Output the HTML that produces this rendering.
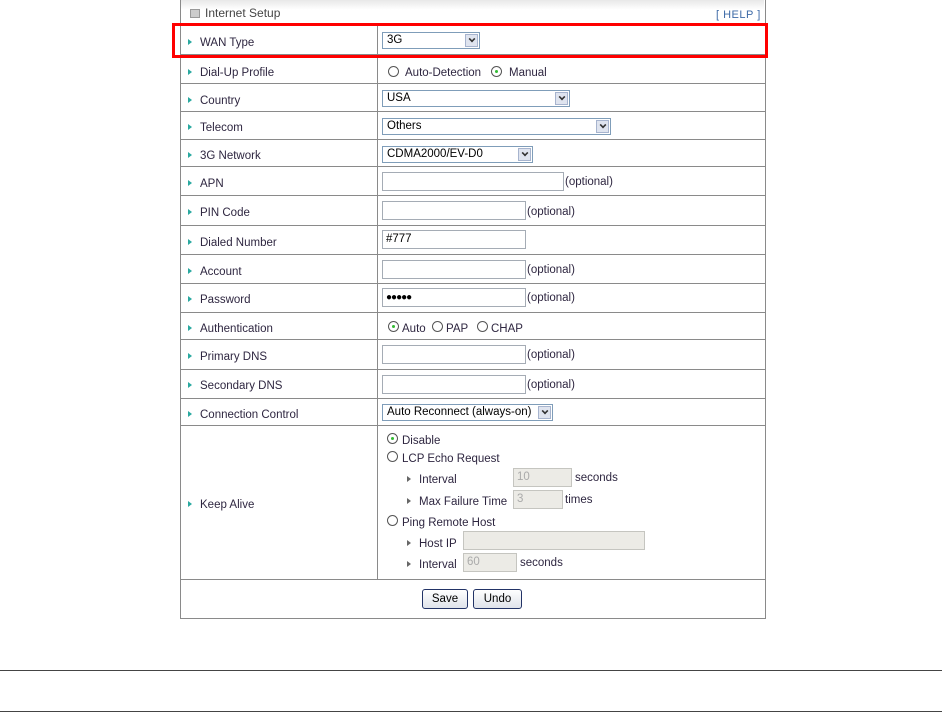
<!DOCTYPE html>
<html><head><style>
body{margin:0;width:942px;height:712px;background:#fff;font-family:"Liberation Sans",Arial,sans-serif;font-size:11.5px;color:#2e2640;position:relative;overflow:hidden}
.a{position:absolute}
.hl{position:absolute;left:180px;width:585px;height:1px;background:#8a8a8a}
.lab{position:absolute;left:188px;line-height:14px}
.lab:before{content:"";display:inline-block;border-left:4px solid #2aa9a0;border-top:3px solid transparent;border-bottom:3px solid transparent;margin-right:8px;vertical-align:1px}
.sl:before{border-left-color:#666}
.sel{position:absolute;height:15px;border:1px solid #7f9db9;background:#fff;font-size:11.5px;line-height:15px;padding-left:4px;box-sizing:content-box;color:#000}
.sel i{position:absolute;right:1px;top:1px;width:13px;height:13px;background:#dfe4ef;border:1px solid #a7b4ce;box-sizing:border-box}
.sel i:after{content:"";position:absolute;left:3px;top:3px;width:4px;height:4px;border-right:2px solid #333;border-bottom:2px solid #333;transform:rotate(45deg) scale(.8);top:1px}
.in{position:absolute;height:19px;border:1px solid #a5acb5;background:#fff;box-sizing:border-box;font-size:11.5px;line-height:17px;padding-left:3px;color:#000}
.dis{background:#ecebe6;border-color:#c5c5c0;color:#aaa}
.rd{position:absolute;width:11px;height:11px;border:1px solid #555;border-radius:50%;background:#fff;box-sizing:border-box}
.rd.on:after{content:"";position:absolute;left:3px;top:3px;width:3px;height:3px;border-radius:50%;background:#3b3}
.t{position:absolute;line-height:14px}
.btn{position:absolute;height:20px;border:1px solid #223366;border-radius:3px;background:linear-gradient(#fff,#dfe3ea);font-size:11.5px;line-height:18px;text-align:center;box-sizing:border-box;color:#000}
</style></head><body>
<div class="a" style="left:180px;top:0;width:584px;height:618px;border:1px solid #8a8a8a;border-top:none"></div>
<div class="a" style="left:181px;top:0;width:583px;height:24px;background:linear-gradient(#e8e8e8,#fff 40%)"></div>
<div class="a" style="left:377px;top:25px;width:1px;height:554px;background:#8a8a8a"></div>
<div class="a" style="left:190px;top:9px;width:8px;height:7px;background:#ccc;border:1px solid #999"></div>
<div class="t" style="left:205px;top:6px;color:#444;font-size:12px">Internet Setup</div>
<div class="t" style="left:716px;top:8px;color:#3d6aa7;font-size:11px;letter-spacing:.5px">[ HELP ]</div>
<div class="hl" style="top:24px;background:#bbb"></div>
<div class="hl" style="top:54px"></div><div class="hl" style="top:83px"></div><div class="hl" style="top:111px"></div><div class="hl" style="top:139px"></div><div class="hl" style="top:166px"></div><div class="hl" style="top:195px"></div><div class="hl" style="top:225px"></div><div class="hl" style="top:254px"></div><div class="hl" style="top:283px"></div><div class="hl" style="top:312px"></div><div class="hl" style="top:339px"></div><div class="hl" style="top:369px"></div><div class="hl" style="top:398px"></div><div class="hl" style="top:425px"></div><div class="hl" style="top:579px"></div>
<div class="a" style="left:0;top:670px;width:942px;height:1px;background:#444"></div>
<div class="a" style="left:0;top:711px;width:942px;height:1px;background:#444"></div>

<div class="lab" style="top:36px">WAN Type</div>
<div class="lab" style="top:66px">Dial-Up Profile</div>
<div class="lab" style="top:94px">Country</div>
<div class="lab" style="top:121px">Telecom</div>
<div class="lab" style="top:149px">3G Network</div>
<div class="lab" style="top:177px">APN</div>
<div class="lab" style="top:206px">PIN Code</div>
<div class="lab" style="top:236px">Dialed Number</div>
<div class="lab" style="top:265px">Account</div>
<div class="lab" style="top:293px">Password</div>
<div class="lab" style="top:322px">Authentication</div>
<div class="lab" style="top:350px">Primary DNS</div>
<div class="lab" style="top:379px">Secondary DNS</div>
<div class="lab" style="top:408px">Connection Control</div>
<div class="lab" style="top:498px">Keep Alive</div>

<div class="sel" style="left:382px;top:32px;width:92px">3G<i></i></div>
<div class="rd" style="left:388px;top:66px"></div><div class="t" style="left:405px;top:66px">Auto-Detection</div>
<div class="rd on" style="left:491px;top:66px"></div><div class="t" style="left:509px;top:66px">Manual</div>
<div class="sel" style="left:382px;top:90px;width:182px">USA<i></i></div>
<div class="sel" style="left:382px;top:118px;width:223px">Others<i></i></div>
<div class="sel" style="left:382px;top:146px;width:145px">CDMA2000/EV-D0<i></i></div>
<div class="in" style="left:382px;top:172px;width:182px"></div><div class="t" style="left:565px;top:175px">(optional)</div>
<div class="in" style="left:382px;top:201px;width:144px"></div><div class="t" style="left:527px;top:205px">(optional)</div>
<div class="in" style="left:382px;top:230px;width:144px">#777</div>
<div class="in" style="left:382px;top:260px;width:144px"></div><div class="t" style="left:527px;top:263px">(optional)</div>
<div class="in" style="left:382px;top:288px;width:144px;font-size:10px;letter-spacing:-1px">●●●●●</div><div class="t" style="left:527px;top:291px">(optional)</div>
<div class="rd on" style="left:388px;top:321px"></div><div class="t" style="left:402px;top:322px">Auto</div>
<div class="rd" style="left:432px;top:321px"></div><div class="t" style="left:446px;top:322px">PAP</div>
<div class="rd" style="left:477px;top:321px"></div><div class="t" style="left:491px;top:322px">CHAP</div>
<div class="in" style="left:382px;top:345px;width:144px"></div><div class="t" style="left:527px;top:348px">(optional)</div>
<div class="in" style="left:382px;top:375px;width:144px"></div><div class="t" style="left:527px;top:378px">(optional)</div>
<div class="sel" style="left:382px;top:404px;width:165px">Auto Reconnect (always-on)<i></i></div>

<div class="rd on" style="left:387px;top:433px"></div><div class="t" style="left:402px;top:434px">Disable</div>
<div class="rd" style="left:387px;top:451px"></div><div class="t" style="left:402px;top:452px">LCP Echo Request</div>
<div class="lab sl" style="left:407px;top:473px">Interval</div>
<div class="in dis" style="left:513px;top:468px;width:59px">10</div><div class="t" style="left:575px;top:471px">seconds</div>
<div class="lab sl" style="left:407px;top:495px">Max Failure Time</div>
<div class="in dis" style="left:513px;top:490px;width:50px">3</div><div class="t" style="left:565px;top:493px">times</div>
<div class="rd" style="left:387px;top:515px"></div><div class="t" style="left:402px;top:516px">Ping Remote Host</div>
<div class="lab sl" style="left:407px;top:537px">Host IP</div>
<div class="in dis" style="left:463px;top:531px;width:182px"></div>
<div class="lab sl" style="left:407px;top:558px">Interval</div>
<div class="in dis" style="left:463px;top:553px;width:54px">60</div><div class="t" style="left:520px;top:556px">seconds</div>

<div class="btn" style="left:422px;top:589px;width:46px">Save</div>
<div class="btn" style="left:473px;top:589px;width:49px">Undo</div>

<div class="a" style="left:172px;top:23px;width:590px;height:29px;border:3px solid #f00"></div>
</body></html>
